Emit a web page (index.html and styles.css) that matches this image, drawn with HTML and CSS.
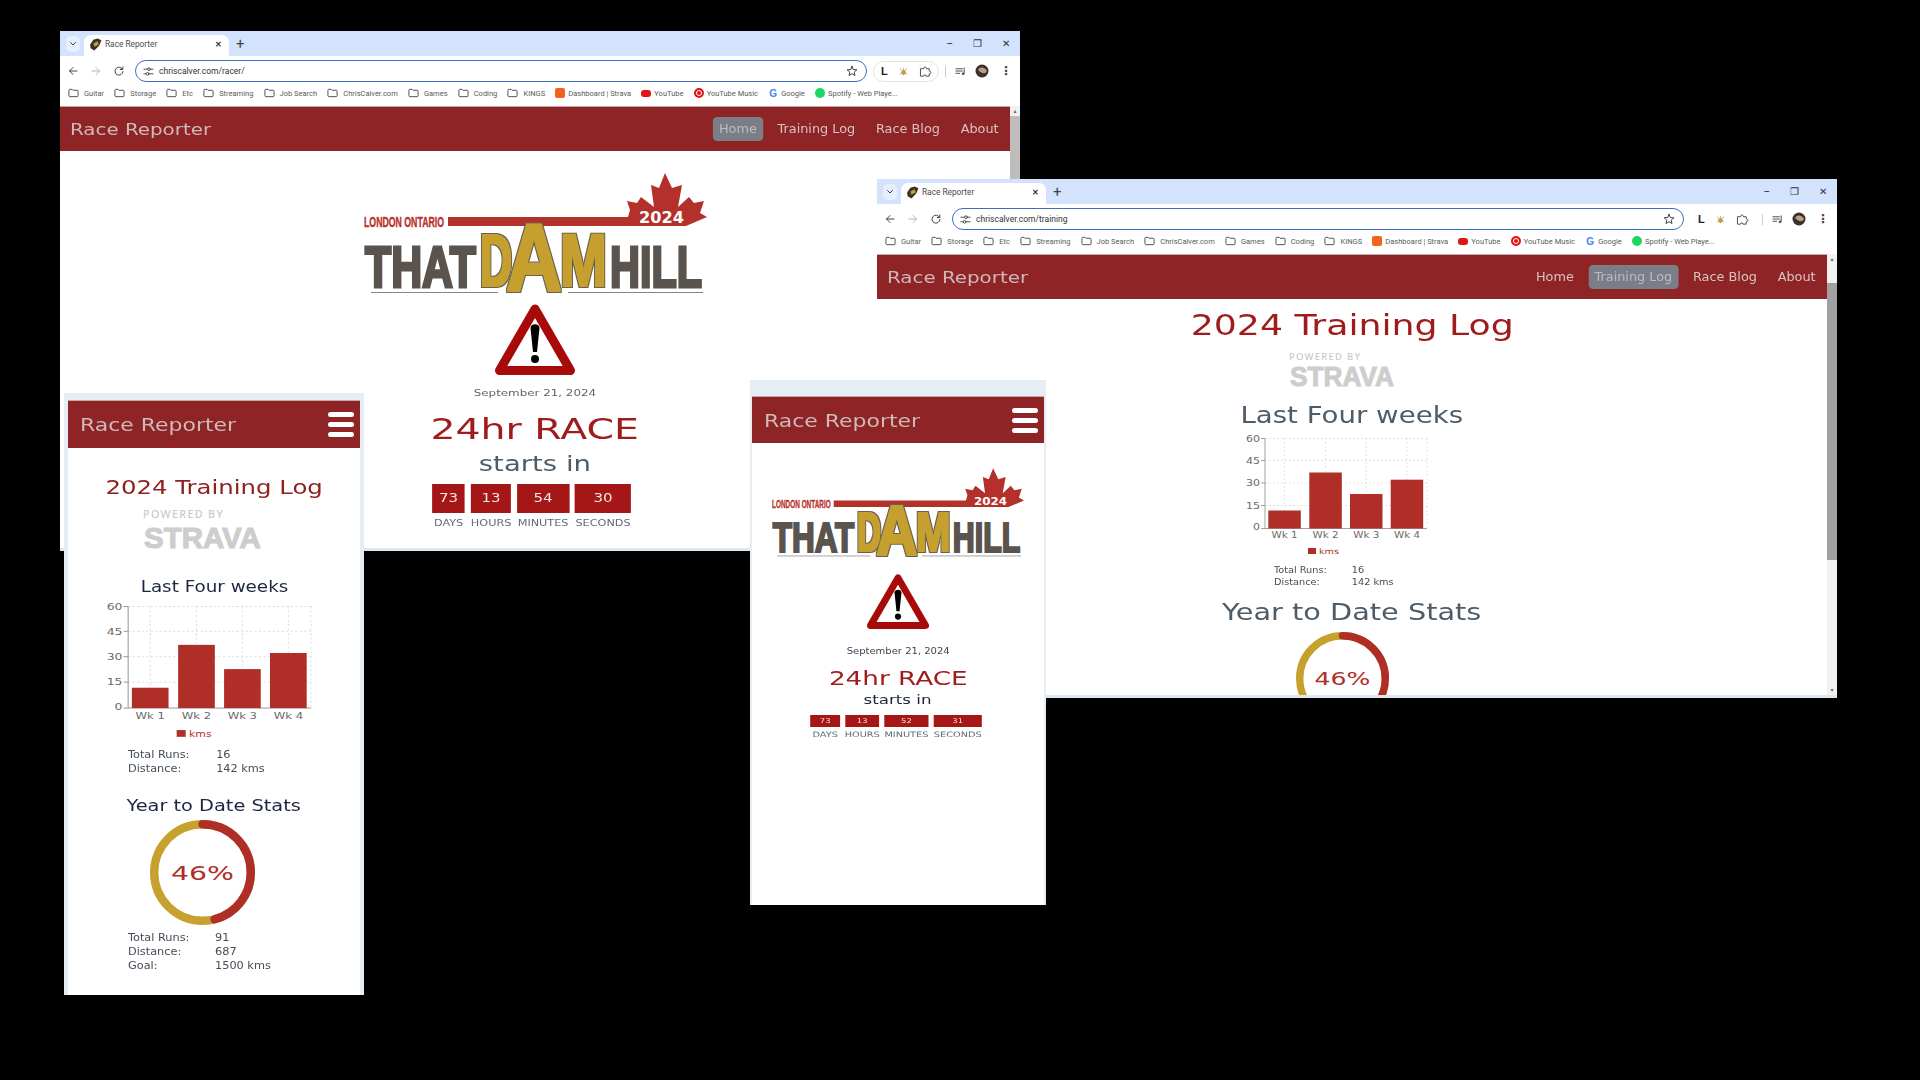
FILE: index.html
```html
<!DOCTYPE html>
<html lang="en">
<head>
<meta charset="utf-8">
<title>Race Reporter</title>
<link rel="stylesheet" href="styles.css">
</head>
<body>
<svg class="defs" aria-hidden="true">
  <defs>
    <filter id="heavy" x="-15%" y="-15%" width="130%" height="130%">
      <feMorphology in="SourceAlpha" operator="dilate" radius="2.200" result="outer"/>
      <feFlood flood-color="#6a6150"/>
      <feComposite in2="outer" operator="in" result="edge"/>
      <feMorphology in="SourceGraphic" operator="dilate" radius="1" result="body"/>
      <feMerge><feMergeNode in="edge"/><feMergeNode in="body"/></feMerge>
    </filter>
  </defs>
  <symbol id="warn" viewBox="0 0 80 71">
    <path class="w-tri" d="M40 5 75.500 66.500H4.500Z"/>
    <path d="M35.500 24C35.500 19 44.500 19 44.500 24L42 48H38Z"/>
    <circle cx="40" cy="55" r="4"/>
  </symbol>
  <symbol id="folder" viewBox="0 0 12 10">
    <path class="i-line" d="M1 2C1 1.400 1.400 1 2 1H4.500L5.500 2H10C10.600 2 11 2.400 11 3V8C11 8.600 10.600 9 10 9H2C1.400 9 1 8.600 1 8Z"/>
  </symbol>
  <symbol id="tune" viewBox="0 0 12 12">
    <path class="i-line" d="M1 3.500H5M8 3.500H11M1 8.500H3M7 8.500H11"/><circle class="i-line" cx="6.500" cy="3.500" r="1.500"/><circle class="i-line" cx="5" cy="8.500" r="1.500"/>
  </symbol>
  <symbol id="star" viewBox="0 0 12 12">
    <path class="i-line" d="M6 1.300 7.400 4.500 10.900 4.800 8.200 7.100 9 10.500 6 8.700 3 10.500 3.800 7.100 1.100 4.800 4.600 4.500Z"/>
  </symbol>
  <symbol id="puzzle" viewBox="0 0 14 14">
    <path class="i-line" d="M2 4H5C5 1.500 8 1.500 8 4H11V6.500C13.500 6.500 13.500 9.500 11 9.500V12H7.500C7.500 10 5 10 5 12H2Z"/>
  </symbol>
  <symbol id="queue" viewBox="0 0 12 10">
    <path class="i-line" d="M1 2H8M1 4.500H8M1 7H5M10 1V7"/><circle class="i-fill" cx="8.800" cy="7.500" r="1.500"/>
  </symbol>
  <symbol id="fav" viewBox="0 0 12 12">
    <path class="i-dark" d="M1 6 4 1.500 8 .5 11.500 2 9.500 7 5 11.500 1.500 9.500Z"/><path class="i-gold" d="M4 5 8 3 9 6 5 8Z"/>
  </symbol>
  <symbol id="bugext" viewBox="0 0 12 12">
    <path class="i-tanline" d="M6 2V10M2 3 10 9M10 3 2 9"/><circle class="i-gold" cx="6" cy="7" r="2.500"/>
  </symbol>
  <symbol id="ava" viewBox="0 0 14 14">
    <circle class="i-dark" cx="7" cy="7" r="6.500"/><path class="i-tan" d="M3 6C5 2 10 3 12 7 10 11 6 9 3 6Z"/>
  </symbol>
  <symbol id="back" viewBox="0 0 10 10"><path class="i-line" d="M9 5H1.500M5 1.500 1.500 5 5 8.500"/></symbol>
  <symbol id="forward" viewBox="0 0 10 10"><path class="i-off" d="M1 5H8.500M5 1.500 8.500 5 5 8.500"/></symbol>
  <symbol id="reload" viewBox="0 0 10 10"><path class="i-line" d="M8.500 3.200A4 4 0 1 0 9 5.500M8.800 1V3.500H6.300"/></symbol>
</svg>

<section class="window win-one">
  <div class="tabstrip">
    <span class="tab-menu"><svg class="ic8" viewBox="0 0 8 8"><path class="i-line" d="M1.500 2.500 4 5 6.500 2.500"/></svg></span>
    <div class="tab"><svg class="fav"><use href="#fav"/></svg><span class="tab-title">Race Reporter</span><span class="tab-x">✕</span></div>
    <span class="tab-new">+</span>
    <div class="win-ctrl"><span>–</span><span>❐</span><span>✕</span></div>
  </div>
  <div class="toolbar">
    <svg class="tool"><use href="#back"/></svg><svg class="tool"><use href="#forward"/></svg><svg class="tool"><use href="#reload"/></svg>
    <div class="omni"><svg class="ic11"><use href="#tune"/></svg><span class="url">chriscalver.com/racer/</span><svg class="ic11 star"><use href="#star"/></svg></div>
    <div class="ext"><b>L</b><svg class="ic11"><use href="#bugext"/></svg><svg class="ic12"><use href="#puzzle"/></svg></div>
    <span class="sep"></span><svg class="ic11"><use href="#queue"/></svg><svg class="ava"><use href="#ava"/></svg><span class="dots">⋮</span>
  </div>
  <div class="bookmarks">
    <span class="bm"><svg class="ic11"><use href="#folder"/></svg>Guitar</span><span class="bm"><svg class="ic11"><use href="#folder"/></svg>Storage</span><span class="bm"><svg class="ic11"><use href="#folder"/></svg>Etc</span><span class="bm"><svg class="ic11"><use href="#folder"/></svg>Streaming</span><span class="bm"><svg class="ic11"><use href="#folder"/></svg>Job Search</span><span class="bm"><svg class="ic11"><use href="#folder"/></svg>ChrisCalver.com</span><span class="bm"><svg class="ic11"><use href="#folder"/></svg>Games</span><span class="bm"><svg class="ic11"><use href="#folder"/></svg>Coding</span><span class="bm"><svg class="ic11"><use href="#folder"/></svg>KINGS</span>
    <span class="bm"><i class="fi fi-strava"></i>Dashboard | Strava</span><span class="bm"><i class="fi fi-yt"></i>YouTube</span><span class="bm"><i class="fi fi-ytm"></i>YouTube Music</span><span class="bm"><b class="fi-g">G</b>Google</span><span class="bm"><i class="fi fi-sp"></i>Spotify - Web Playe...</span>
  </div>
  <div class="viewport">
    <div class="page">
      <nav class="nav"><span class="brand">Race Reporter</span><div class="links"><a class="link active">Home</a><a class="link">Training Log</a><a class="link">Race Blog</a><a class="link">About</a></div></nav>
      <main class="race">
        <svg class="logo" viewBox="0 0 343 122">
          <text class="l-red" x="0" y="54" font-size="14" textLength="80" lengthAdjust="spacingAndGlyphs">LONDON ONTARIO</text>
          <path class="f-red" d="M84 44H264L266 37 263 28 273 30 277 24 290 34 287 12 295 15 301 0 308 15 318 12 314 34 325 24 330 30 340 28 336 40 343 44 322 53H84Z"/>
          <text class="l-2024" x="275" y="50" font-size="15" textLength="45" lengthAdjust="spacingAndGlyphs">2024</text>
          <text class="l-gray" x="1" y="114" font-size="57" textLength="111" lengthAdjust="spacingAndGlyphs">THAT</text>
          <text class="l-gray" x="246" y="114" font-size="57" textLength="92" lengthAdjust="spacingAndGlyphs">HILL</text>
          <g class="l-gold">
            <text x="116" y="113" font-size="75" textLength="32" lengthAdjust="spacingAndGlyphs">D</text>
            <text x="196" y="113" font-size="75" textLength="47" lengthAdjust="spacingAndGlyphs">M</text>
            <text x="142" y="118" font-size="96" textLength="56" lengthAdjust="spacingAndGlyphs">A</text>
          </g>
          <path class="l-line" d="M7 119.500H134M204 119.500H339"/>
        </svg>
        <svg class="warn"><use href="#warn"/></svg>
        <p class="date">September 21, 2024</p>
        <h2 class="race-title">24hr RACE</h2>
        <p class="starts">starts in</p>
        <div class="count">
          <div class="unit u-days"><span class="num">73</span><span class="lab">DAYS</span></div>
          <div class="unit u-hours"><span class="num">13</span><span class="lab">HOURS</span></div>
          <div class="unit u-mins"><span class="num">54</span><span class="lab">MINUTES</span></div>
          <div class="unit u-secs"><span class="num">30</span><span class="lab">SECONDS</span></div>
        </div>
      </main>
    </div>
    <div class="scrollbar"><span class="arrow">▴</span><span class="thumb"></span></div>
  </div>
</section>

<section class="window win-two">
  <div class="tabstrip">
    <span class="tab-menu"><svg class="ic8" viewBox="0 0 8 8"><path class="i-line" d="M1.500 2.500 4 5 6.500 2.500"/></svg></span>
    <div class="tab"><svg class="fav"><use href="#fav"/></svg><span class="tab-title">Race Reporter</span><span class="tab-x">✕</span></div>
    <span class="tab-new">+</span>
    <div class="win-ctrl"><span>–</span><span>❐</span><span>✕</span></div>
  </div>
  <div class="toolbar">
    <svg class="tool"><use href="#back"/></svg><svg class="tool"><use href="#forward"/></svg><svg class="tool"><use href="#reload"/></svg>
    <div class="omni"><svg class="ic11"><use href="#tune"/></svg><span class="url">chriscalver.com/training</span><svg class="ic11 star"><use href="#star"/></svg></div>
    <div class="ext ext-plain"><b>L</b><svg class="ic11"><use href="#bugext"/></svg><svg class="ic12"><use href="#puzzle"/></svg></div>
    <span class="sep"></span><svg class="ic11"><use href="#queue"/></svg><svg class="ava"><use href="#ava"/></svg><span class="dots">⋮</span>
  </div>
  <div class="bookmarks">
    <span class="bm"><svg class="ic11"><use href="#folder"/></svg>Guitar</span><span class="bm"><svg class="ic11"><use href="#folder"/></svg>Storage</span><span class="bm"><svg class="ic11"><use href="#folder"/></svg>Etc</span><span class="bm"><svg class="ic11"><use href="#folder"/></svg>Streaming</span><span class="bm"><svg class="ic11"><use href="#folder"/></svg>Job Search</span><span class="bm"><svg class="ic11"><use href="#folder"/></svg>ChrisCalver.com</span><span class="bm"><svg class="ic11"><use href="#folder"/></svg>Games</span><span class="bm"><svg class="ic11"><use href="#folder"/></svg>Coding</span><span class="bm"><svg class="ic11"><use href="#folder"/></svg>KINGS</span>
    <span class="bm"><i class="fi fi-strava"></i>Dashboard | Strava</span><span class="bm"><i class="fi fi-yt"></i>YouTube</span><span class="bm"><i class="fi fi-ytm"></i>YouTube Music</span><span class="bm"><b class="fi-g">G</b>Google</span><span class="bm"><i class="fi fi-sp"></i>Spotify - Web Playe...</span>
  </div>
  <div class="viewport">
    <div class="page">
      <nav class="nav"><span class="brand">Race Reporter</span><div class="links"><a class="link">Home</a><a class="link active">Training Log</a><a class="link">Race Blog</a><a class="link">About</a></div></nav>
      <main class="log">
        <h1 class="log-title">2024 Training Log</h1>
        <svg class="strava" viewBox="0 0 106 35">
          <text class="s-pow" x="0" y="8" font-size="9.500" textLength="71" lengthAdjust="spacing">POWERED BY</text>
          <text class="s-name" x="1" y="34" font-size="27" textLength="104" lengthAdjust="spacingAndGlyphs">STRAVA</text>
        </svg>
        <h3 class="sub sub-first">Last Four weeks</h3>
        <svg class="chart" viewBox="0 0 210 130">
          <path class="c-grid" d="M40 6.500H202M40 28.500H202M40 51H202M40 73.500H202M59.600 6V96M100.500 6V96M141.200 6V96M182 6V96M202 6V96"/>
          <path class="c-axis" d="M36 6.500H40V96.500H202M36 28.500H40M36 51H40M36 73.500H40M36 96.500H40"/>
          <rect class="f-bar" x="43.300" y="78.500" width="32.500" height="18"/>
          <rect class="f-bar" x="84.300" y="40.500" width="32.500" height="56"/>
          <rect class="f-bar" x="125" y="62" width="32.500" height="34.500"/>
          <rect class="f-bar" x="165.700" y="47.700" width="32.500" height="48.800"/>
          <g class="c-y"><text x="35" y="9.500" textLength="14" lengthAdjust="spacingAndGlyphs">60</text><text x="35" y="31.500" textLength="14" lengthAdjust="spacingAndGlyphs">45</text><text x="35" y="54" textLength="14" lengthAdjust="spacingAndGlyphs">30</text><text x="35" y="76.500" textLength="14" lengthAdjust="spacingAndGlyphs">15</text><text x="35" y="98" textLength="7" lengthAdjust="spacingAndGlyphs">0</text></g>
          <g class="c-x"><text x="59.600" y="106" textLength="26" lengthAdjust="spacingAndGlyphs">Wk 1</text><text x="100.500" y="106" textLength="26" lengthAdjust="spacingAndGlyphs">Wk 2</text><text x="141.200" y="106" textLength="26" lengthAdjust="spacingAndGlyphs">Wk 3</text><text x="182" y="106" textLength="26" lengthAdjust="spacingAndGlyphs">Wk 4</text></g>
          <rect class="f-bar" x="83" y="116" width="8" height="6"/>
          <text class="c-leg" x="94" y="122" textLength="20" lengthAdjust="spacingAndGlyphs">kms</text>
        </svg>
        <dl class="stats"><dt>Total Runs:</dt><dd>16</dd><dt>Distance:</dt><dd>142 kms</dd></dl>
        <h3 class="sub sub-year">Year to Date Stats</h3>
        <svg class="donut" viewBox="0 0 100 100">
          <circle class="d-gold" cx="50" cy="50" r="46"/>
          <circle class="d-red" cx="50" cy="50" r="46" pathLength="100" transform="rotate(-90 50 50)"/>
          <text class="d-text" x="50" y="57" textLength="60" lengthAdjust="spacingAndGlyphs">46%</text>
        </svg>
      </main>
    </div>
    <div class="scrollbar"><span class="arrow">▴</span><span class="thumb"></span><span class="arrow arrow-end">▾</span></div>
  </div>
</section>

<section class="phone phone-log">
  <nav class="nav"><span class="brand">Race Reporter</span><div class="burger"><span></span><span></span><span></span></div></nav>
  <main class="log">
    <h1 class="log-title">2024 Training Log</h1>
    <svg class="strava" viewBox="0 0 106 35">
      <text class="s-pow" x="0" y="8" font-size="9.500" textLength="71" lengthAdjust="spacing">POWERED BY</text>
      <text class="s-name" x="1" y="34" font-size="27" textLength="104" lengthAdjust="spacingAndGlyphs">STRAVA</text>
    </svg>
    <h3 class="sub sub-first">Last Four weeks</h3>
    <svg class="chart" viewBox="0 0 210 130">
      <path class="c-grid" d="M40 6.500H202M40 28.500H202M40 51H202M40 73.500H202M59.600 6V96M100.500 6V96M141.200 6V96M182 6V96M202 6V96"/>
      <path class="c-axis" d="M36 6.500H40V96.500H202M36 28.500H40M36 51H40M36 73.500H40M36 96.500H40"/>
      <rect class="f-bar" x="43.300" y="78.500" width="32.500" height="18"/>
      <rect class="f-bar" x="84.300" y="40.500" width="32.500" height="56"/>
      <rect class="f-bar" x="125" y="62" width="32.500" height="34.500"/>
      <rect class="f-bar" x="165.700" y="47.700" width="32.500" height="48.800"/>
      <g class="c-y"><text x="35" y="9.500" textLength="14" lengthAdjust="spacingAndGlyphs">60</text><text x="35" y="31.500" textLength="14" lengthAdjust="spacingAndGlyphs">45</text><text x="35" y="54" textLength="14" lengthAdjust="spacingAndGlyphs">30</text><text x="35" y="76.500" textLength="14" lengthAdjust="spacingAndGlyphs">15</text><text x="35" y="98" textLength="7" lengthAdjust="spacingAndGlyphs">0</text></g>
      <g class="c-x"><text x="59.600" y="106" textLength="26" lengthAdjust="spacingAndGlyphs">Wk 1</text><text x="100.500" y="106" textLength="26" lengthAdjust="spacingAndGlyphs">Wk 2</text><text x="141.200" y="106" textLength="26" lengthAdjust="spacingAndGlyphs">Wk 3</text><text x="182" y="106" textLength="26" lengthAdjust="spacingAndGlyphs">Wk 4</text></g>
      <rect class="f-bar" x="83" y="116" width="8" height="6"/>
      <text class="c-leg" x="94" y="122" textLength="20" lengthAdjust="spacingAndGlyphs">kms</text>
    </svg>
    <dl class="stats"><dt>Total Runs:</dt><dd>16</dd><dt>Distance:</dt><dd>142 kms</dd></dl>
    <h3 class="sub sub-year">Year to Date Stats</h3>
    <svg class="donut" viewBox="0 0 100 100">
      <circle class="d-gold" cx="50" cy="50" r="46"/>
      <circle class="d-red" cx="50" cy="50" r="46" pathLength="100" transform="rotate(-90 50 50)"/>
      <text class="d-text" x="50" y="57" textLength="60" lengthAdjust="spacingAndGlyphs">46%</text>
    </svg>
    <dl class="stats stats-year"><dt>Total Runs:</dt><dd>91</dd><dt>Distance:</dt><dd>687</dd><dt>Goal:</dt><dd>1500 kms</dd></dl>
  </main>
</section>

<section class="phone phone-race">
  <nav class="nav"><span class="brand">Race Reporter</span><div class="burger"><span></span><span></span><span></span></div></nav>
  <main class="race">
    <svg class="logo" viewBox="0 0 343 122">
      <text class="l-red" x="0" y="54" font-size="14" textLength="80" lengthAdjust="spacingAndGlyphs">LONDON ONTARIO</text>
      <path class="f-red" d="M84 44H264L266 37 263 28 273 30 277 24 290 34 287 12 295 15 301 0 308 15 318 12 314 34 325 24 330 30 340 28 336 40 343 44 322 53H84Z"/>
      <text class="l-2024" x="275" y="50" font-size="15" textLength="45" lengthAdjust="spacingAndGlyphs">2024</text>
      <text class="l-gray" x="1" y="114" font-size="57" textLength="111" lengthAdjust="spacingAndGlyphs">THAT</text>
      <text class="l-gray" x="246" y="114" font-size="57" textLength="92" lengthAdjust="spacingAndGlyphs">HILL</text>
      <g class="l-gold">
        <text x="116" y="113" font-size="75" textLength="32" lengthAdjust="spacingAndGlyphs">D</text>
        <text x="196" y="113" font-size="75" textLength="47" lengthAdjust="spacingAndGlyphs">M</text>
        <text x="142" y="118" font-size="96" textLength="56" lengthAdjust="spacingAndGlyphs">A</text>
      </g>
      <path class="l-line" d="M7 119.500H134M204 119.500H339"/>
    </svg>
    <svg class="warn"><use href="#warn"/></svg>
    <p class="date">September 21, 2024</p>
    <h2 class="race-title">24hr RACE</h2>
    <p class="starts">starts in</p>
    <div class="count">
      <div class="unit u-days"><span class="num">73</span><span class="lab">DAYS</span></div>
      <div class="unit u-hours"><span class="num">13</span><span class="lab">HOURS</span></div>
      <div class="unit u-mins"><span class="num">52</span><span class="lab">MINUTES</span></div>
      <div class="unit u-secs"><span class="num">31</span><span class="lab">SECONDS</span></div>
    </div>
  </main>
</section>
</body>
</html>
```

FILE: styles.css
```css
* { box-sizing: border-box; }
html, body { margin: 0; height: 100%; }
body { width: 1920px; height: 1080px; background: #000; overflow: hidden; position: relative; font-family: "DejaVu Sans", sans-serif; }
h1, h2, h3, p, dl, dd { margin: 0; font-weight: 400; }
.defs { position: absolute; width: 0; height: 0; }

/* Desktop windows on the free canvas */
.window { position: absolute; width: 960px; display: flex; flex-direction: column; background: #fff; overflow: hidden; }
.win-one { left: 60px; top: 31px; height: 520px; z-index: 1; }
.win-two { left: 877px; top: 179px; height: 519px; z-index: 2; }
.phone { position: absolute; display: flex; flex-direction: column; background: #fff; overflow: hidden; }
.phone-log { left: 64px; top: 393px; width: 300px; height: 602px; z-index: 3; border: solid #e6edf5; border-width: 7px 4px 0; }
.phone-race { left: 750px; top: 380px; width: 296px; height: 525px; z-index: 4; border: solid #e6edf5; border-width: 16px 2px 0; }

/* Browser chrome */
.tabstrip { height: 25px; flex: none; background: #d3e3fd; display: flex; align-items: flex-end; padding-left: 6px; font-family: Roboto, sans-serif; }
.tab-menu { width: 14px; height: 16px; margin-bottom: 4px; border-radius: 5px; background: #e6effd; display: flex; align-items: center; justify-content: center; }
.tab { width: 145px; height: 21px; margin-left: 4px; background: #fff; border-radius: 7px 7px 0 0; display: flex; align-items: center; padding: 0 7px 3px 5px; gap: 3px; }
.fav { width: 13px; height: 13px; flex: none; }
.tab-title { font-size: 8.300px; color: #4b4b4b; flex: 1; }
.tab-x { font-size: 8px; font-weight: 700; color: #333; }
.tab-new { font-size: 15px; line-height: 18px; margin: 0 0 3px 7px; color: #444; }
.win-ctrl { margin-left: auto; display: flex; gap: 20px; padding: 0 10px 4px 0; font-size: 10px; line-height: 16px; color: #333; }
.toolbar { height: 27px; flex: none; padding: 4px 8px 1px; display: flex; align-items: center; background: #fff; }
.tool { width: 10px; height: 10px; margin-right: 13px; flex: none; }
.omni { width: 732px; height: 22px; flex: none; margin-left: -2px; border: 1.500px solid #3b70b8; border-radius: 11px; display: flex; align-items: center; padding: 0 8px 0 7px; gap: 5px; }
.url { flex: 1; font: 8.500px Roboto, sans-serif; color: #333; }
.ext { width: 66px; height: 21px; flex: none; margin-left: 6px; border: 1px solid #e3e3e3; border-radius: 11px; display: flex; align-items: center; justify-content: space-between; padding: 0 6px 0 7px; font: 700 11px "Liberation Sans", sans-serif; color: #222; }
.ext-plain { border-color: transparent; }
.sep { width: 1px; height: 11px; background: #ccc; flex: none; margin: 0 9px 0 6px; }
.ava { width: 14px; height: 14px; margin-left: 9px; flex: none; }
.dots { margin-left: 11px; font-size: 12px; font-weight: 700; color: #444; }
.bookmarks { height: 23px; flex: none; padding: 0 0 3px 8px; display: flex; align-items: center; gap: 10.200px; background: #fff; font: 7.500px Roboto, sans-serif; color: #5a5a5a; white-space: nowrap; overflow: hidden; }
.bm { display: flex; align-items: center; gap: 5px; }
.bm .ic11 { width: 11px; height: 10px; }
.ic11 { width: 11px; height: 11px; flex: none; }
.ic12 { width: 13px; height: 13px; flex: none; }
.ic8 { width: 8px; height: 8px; }
.star { width: 12px; height: 12px; }
.i-line { fill: none; stroke: #444; stroke-width: 1; stroke-linecap: round; }
.i-off { fill: none; stroke: #b5b5b5; stroke-width: 1; stroke-linecap: round; }
.i-tanline { fill: none; stroke: #b9ad97; stroke-width: 1; }
.i-fill { fill: #555; }
.i-dark { fill: #3a3228; }
.i-gold { fill: #c0a030; }
.i-tan { fill: #b7a184; }
.fi { display: block; width: 10px; height: 10px; flex: none; }
.fi-strava { background: #f0641e; border-radius: 2px; margin-right: -2px; }
.fi-yt { background: #e01515; border-radius: 3px; height: 7px; margin-right: -2px; }
.fi-ytm { background: #e01515; border-radius: 50%; border: 2.500px solid #e01515; box-shadow: inset 0 0 0 1px #fff; margin-right: -2px; }
.fi-sp { background: #1ed760; border-radius: 50%; margin-right: -2px; }
.fi-g { font: 700 10px "Liberation Sans", sans-serif; color: #4285f4; width: 10px; text-align: center; margin-right: -2px; }

.viewport { flex: 1; min-height: 0; display: flex; padding-bottom: 3px; background: #dfe8f0; }
.page { flex: 1; min-width: 0; display: flex; flex-direction: column; background: #fff; overflow: hidden; }
.scrollbar { width: 10px; background: #f1f1f1; display: flex; flex-direction: column; }
.arrow { height: 10px; font-size: 6px; line-height: 10px; text-align: center; color: #666; }
.thumb { height: 277px; background: #bdbdbd; }
.win-two .thumb { margin-top: 19px; background: #a0a0a0; }
.arrow-end { margin-top: auto; }

/* Site nav */
.nav { height: 45px; flex: none; background: #8f2426; display: flex; align-items: center; justify-content: space-between; padding: 0 5px 0 10px; border-top: 1px solid #c9a5a5; }
.brand { font-size: 16px; color: #cdbab9; white-space: nowrap; transform: scaleX(1.240); transform-origin: left center; }
.links { display: flex; gap: 8.200px; transform: scaleX(1.070); transform-origin: right center; }
.link { font-size: 12px; line-height: 24px; padding: 0 5.600px; border-radius: 4px; color: #d6c5c4; white-space: nowrap; }
.link.active { background: #7b7e86; color: #b9bcc2; }
.phone .nav { padding: 0 6px 0 12px; }
.phone-log .nav { height: 48px; }
.phone-race .nav { height: 47px; }
.phone .brand { font-size: 18px; transform: scaleX(1.220); }
.burger { width: 26px; display: flex; flex-direction: column; gap: 5px; }
.burger span { height: 5px; background: #fff; border-radius: 3px; }

/* Race countdown */
.race { display: flex; flex-direction: column; align-items: center; }
.logo { width: 343px; height: 122px; margin-top: 22px; display: block; flex: none; }
.warn { width: 80px; height: 71px; margin-top: 9px; display: block; flex: none; }
.date { margin-top: 12px; font-size: 9.500px; line-height: 12px; color: #5a6670; white-space: nowrap; transform: scaleX(1.250); }
.race-title { margin-top: 13px; font-size: 29px; line-height: 34px; color: #a01c1c; white-space: nowrap; transform: scaleX(1.360); }
.starts { margin-top: 4px; font-size: 22px; line-height: 28px; color: #4d5c68; white-space: nowrap; transform: scaleX(1.250); }
.count { margin: 6px 6px 0 0; display: flex; gap: 4.800px; transform: scaleX(1.250); }
.unit { display: flex; flex-direction: column; align-items: center; }
.u-days { width: 26.400px; } .u-hours { width: 32px; } .u-mins { width: 41.600px; } .u-secs { width: 44.800px; }
.num { width: 100%; height: 29px; line-height: 29px; text-align: center; background: #a51616; color: #f3e6e6; font-size: 12px; }
.lab { margin-top: 4px; font-size: 9px; line-height: 12px; color: #5f6a74; white-space: nowrap; }
.phone-race .logo { width: 252px; height: 90px; margin-top: 25px; }
.phone-race .warn { width: 62px; height: 55px; margin-top: 16px; }
.phone-race .date { margin-top: 17px; font-size: 8px; color: #3c4650; }
.phone-race .race-title { margin-top: 8px; font-size: 19px; line-height: 24px; transform: scaleX(1.380); }
.phone-race .starts { margin-top: 2px; font-size: 13px; line-height: 16px; color: #1d2540; transform: scaleX(1.280); }
.phone-race .count { margin: 7px 5px 0 0; gap: 4px; transform: scaleX(1.300); }
.phone-race .u-days { width: 23px; } .phone-race .u-hours { width: 26px; } .phone-race .u-mins { width: 34px; } .phone-race .u-secs { width: 37px; }
.phone-race .num { height: 12px; line-height: 12px; font-size: 6.500px; }
.phone-race .lab { margin-top: 3px; font-size: 7.500px; line-height: 10px; }

/* Training log */
.log { display: flex; flex-direction: column; align-items: center; }
.log-title { margin-top: 8px; font-size: 29px; line-height: 36px; color: #a01c1c; white-space: nowrap; transform: scaleX(1.250); }
.strava { width: 106px; height: 35px; margin: 9px 20px 0 0; display: block; flex: none; }
.sub { font-size: 23px; line-height: 30px; color: #4d5c68; white-space: nowrap; }
.sub-first { margin-top: 13px; transform: scaleX(1.200); }
.chart { width: 210px; height: 130px; margin: 2px 44px 0 0; display: block; flex: none; }
.stats { width: 156px; margin-top: 2px; display: grid; grid-template-columns: 72px 1fr; font-size: 9px; line-height: 12px; color: #444d57; white-space: nowrap; transform: scaleX(1.080); transform-origin: left center; }
.sub-year { margin-top: 9px; transform: scaleX(1.250); }
.donut { width: 93px; height: 93px; margin: 5px 20px 0 0; display: block; flex: none; }

.phone-log .log-title { margin-top: 24px; font-size: 20px; line-height: 30px; color: #8f2020; transform: scaleX(1.220); }
.phone-log .strava { width: 119px; height: 40px; margin: 7px 24px 0 0; }
.phone-log .sub { font-size: 15px; line-height: 24px; color: #1d2540; }
.phone-log .sub-first { margin-top: 26px; transform: scaleX(1.220); }
.phone-log .chart { width: 237px; height: 147px; margin: 0 25px 0 0; }
.phone-log .stats { width: 172px; margin-top: 2px; grid-template-columns: 78px 1fr; font-size: 10px; line-height: 14px; transform: scaleX(1.130); }
.phone-log .sub-year { margin-top: 18px; transform: scaleX(1.290); }
.phone-log .donut { width: 105px; height: 105px; margin: 2px 23px 0 0; }
.phone-log .stats-year { margin-top: 6px; grid-template-columns: 77px 1fr; }

/* SVG artwork */
.l-red { font-family: "Liberation Sans", sans-serif; font-weight: 700; fill: #b8332d; stroke: #b8332d; stroke-width: .4; }
.f-red { fill: #b3302b; }
.l-2024 { font-family: "DejaVu Sans", sans-serif; font-weight: 700; fill: #fff; }
.l-gray { font-family: "Liberation Sans", sans-serif; font-weight: 700; fill: #5a534e; stroke: #5a534e; stroke-width: 3; }
.l-gold { font-family: "Liberation Sans", sans-serif; font-weight: 700; fill: #c5a02f; filter: url(#heavy); }
.l-line { fill: none; stroke: #8b8580; stroke-width: 1; }
.w-tri { fill: #fff; stroke: #a80a0a; stroke-width: 9; stroke-linejoin: round; }
.s-pow { font-family: "Noto Sans", sans-serif; font-weight: 500; fill: #c9c9c9; }
.s-name { font-family: "Liberation Sans", sans-serif; font-weight: 700; fill: #cdcdcd; stroke: #cdcdcd; stroke-width: 1; }
.c-grid { fill: none; stroke: #dcdcdc; stroke-width: .8; stroke-dasharray: 2 2; }
.c-axis { fill: none; stroke: #8a8a8a; stroke-width: .8; }
.f-bar { fill: #b02e28; }
.c-y text, .c-x text { font-family: "DejaVu Sans", sans-serif; font-size: 8.500px; fill: #6a6a6a; }
.c-y text { text-anchor: end; }
.c-x text { text-anchor: middle; }
.c-leg { font-family: "DejaVu Sans", sans-serif; font-size: 7.500px; fill: #b02e28; }
.d-gold { fill: none; stroke: #c7a12e; stroke-width: 8; }
.d-red { fill: none; stroke: #b02e28; stroke-width: 8; stroke-dasharray: 46 54; stroke-linecap: round; }
.d-text { font-family: "DejaVu Sans", sans-serif; font-size: 19px; fill: #b02e28; text-anchor: middle; }
```
